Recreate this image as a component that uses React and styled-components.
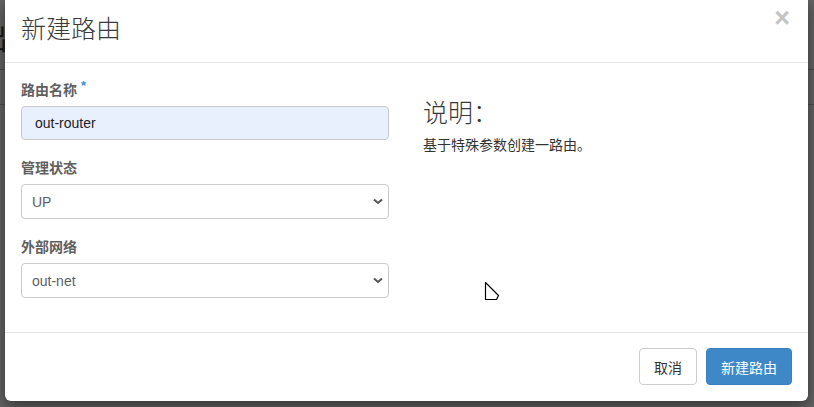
import React from 'react';
import styled, { createGlobalStyle } from 'styled-components';

const GlobalStyle = createGlobalStyle`
  html, body {
    margin: 0;
    padding: 0;
    overflow: hidden;
  }

  body {
    font-family: 'Liberation Sans', 'Noto Sans CJK SC', sans-serif;
    font-size: 14px;
    color: #333;
  }

  * {
    box-sizing: border-box;
  }
`;

function Chevron() {
  return (
    <svg width="10" height="7" viewBox="0 0 10 7">
      <path d="M1 1.5 L5 5 L9 1.5" fill="none" stroke="#555" strokeWidth="2" />
    </svg>
  );
}

function Cursor() {
  return (
    <svg width="16" height="22" viewBox="0 0 16 22">
      <path
        d="M1.5 1.5 L14.5 14.5 L12.5 18.5 L1.5 18.5 Z"
        fill="#fff"
        stroke="#000"
        strokeWidth="1.2"
        strokeLinejoin="round"
      />
    </svg>
  );
}

function SelectField({ value }) {
  return (
    <SelectWrap>
      <Select defaultValue={value}>
        <option value={value}>{value}</option>
      </Select>
      <ChevronBox>
        <Chevron />
      </ChevronBox>
    </SelectWrap>
  );
}

function App() {
  return (
    <>
      <GlobalStyle />
      <Backdrop>
        <BehindGlyph aria-hidden="true">出</BehindGlyph>
        <Modal>
          <ModalHeader>
            <ModalTitle>新建路由</ModalTitle>
            <CloseButton>×</CloseButton>
          </ModalHeader>

          <ModalBody>
            <FormColumn>
              <FormGroup>
                <Label>
                  路由名称<Required>*</Required>
                </Label>
                <TextInput type="text" defaultValue="out-router" />
              </FormGroup>
              <FormGroup>
                <Label>管理状态</Label>
                <SelectField value="UP" />
              </FormGroup>
              <FormGroup>
                <Label>外部网络</Label>
                <SelectField value="out-net" />
              </FormGroup>
            </FormColumn>

            <HelpColumn>
              <HelpTitle>说明：</HelpTitle>
              <HelpText>基于特殊参数创建一路由。</HelpText>
            </HelpColumn>
          </ModalBody>

          <ModalFooter>
            <Button>取消</Button>
            <Button primary>新建路由</Button>
          </ModalFooter>

          <CursorBox>
            <Cursor />
          </CursorBox>
        </Modal>
      </Backdrop>
    </>
  );
}

export default App;

const Backdrop = styled.div`
  position: relative;
  width: 100vw;
  height: 100vh;
  padding-left: 5px;

  background-color: #646464;
  background-image: linear-gradient(
      to bottom,
      transparent 69px,
      #4e4e4e 69px,
      #4e4e4e 70px,
      transparent 70px
    ),
    linear-gradient(
      to bottom,
      transparent 104px,
      #4e4e4e 104px,
      #4e4e4e 105px,
      transparent 105px
    );
  overflow: hidden;
`;

const BehindGlyph = styled.div`
  position: absolute;
  left: -22px;
  top: 18px;

  font-family: 'Noto Sans CJK SC', sans-serif;
  font-size: 30px;
  line-height: 36px;
  color: #1c1c1c;
`;

const Modal = styled.div`
  position: relative;
  width: 803px;

  background-color: #fff;
  border-radius: 0 0 6px 6px;
  box-shadow: 0 5px 15px rgba(0, 0, 0, 0.5);

  display: flex;
  flex-direction: column;
`;

const ModalHeader = styled.div`
  padding: 10px 18px 18px 16px;
  border-bottom: 1px solid #e5e5e5;

  display: flex;
  justify-content: space-between;
  align-items: flex-start;
`;

const ModalTitle = styled.h4`
  margin: 0;

  font-family: 'Noto Sans CJK SC', sans-serif;
  font-size: 25px;
  font-weight: 300;
  line-height: 34px;
  color: #3a3a3a;
`;

const CloseButton = styled.button`
  padding: 0;
  margin-top: -2px;

  background: none;
  border: none;

  font-family: 'Liberation Sans', sans-serif;
  font-size: 27px;
  font-weight: 700;
  line-height: 20px;
  color: #c4c4c4;
`;

const ModalBody = styled.div`
  padding: 17px 16px 34px;

  display: grid;
  grid-template-columns: 368px 1fr;
  column-gap: 34px;
`;

const FormColumn = styled.div`
  display: flex;
  flex-direction: column;
  gap: 18px;
`;

const FormGroup = styled.div`
  display: flex;
  flex-direction: column;
  gap: 6px;
`;

const Label = styled.label`
  height: 20px;

  font-family: 'Liberation Sans', 'Noto Sans CJK SC', sans-serif;
  font-size: 14px;
  font-weight: 700;
  line-height: 20px;
  color: #5f5f5f;
`;

const Required = styled.span`
  position: relative;
  top: -5px;
  margin-left: 4px;

  font-size: 13px;
  color: #3d8bd0;
`;

const TextInput = styled.input`
  width: 100%;
  height: 34px;
  padding: 0 13px;

  background-color: #e8f0fe;
  border: 1px solid #c9c9c9;
  border-radius: 4px;

  font-family: 'Liberation Sans', sans-serif;
  font-size: 14px;
  color: #222;

  &:focus {
    outline: none;
  }
`;

const SelectWrap = styled.div`
  position: relative;
  width: 100%;
  height: 35px;
`;

const Select = styled.select`
  width: 100%;
  height: 100%;
  padding: 0 10px;

  appearance: none;
  background-color: #fff;
  border: 1px solid #cbcbcb;
  border-radius: 4px;

  font-family: 'Liberation Sans', sans-serif;
  font-size: 14px;
  color: #606060;

  &:focus {
    outline: none;
  }
`;

const ChevronBox = styled.span`
  position: absolute;
  right: 6px;
  top: 14px;

  display: flex;
  pointer-events: none;
`;

const HelpColumn = styled.div`
  padding-top: 16px;

  display: flex;
  flex-direction: column;
  gap: 8px;
`;

const HelpTitle = styled.h3`
  margin: 0;

  font-family: 'Noto Sans CJK SC', sans-serif;
  font-size: 25px;
  font-weight: 300;
  line-height: 30px;
  color: #3a3a3a;
`;

const HelpText = styled.p`
  margin: 0;

  font-family: 'Noto Sans CJK SC', sans-serif;
  font-size: 14px;
  line-height: 20px;
  color: #333;
`;

const ModalFooter = styled.div`
  padding: 15px 16px 16px;
  border-top: 1px solid #e5e5e5;

  display: flex;
  justify-content: flex-end;
  gap: 9px;
`;

const Button = styled.button`
  height: 37px;
  padding: 0 14px;

  background-color: ${({ primary }) => (primary ? '#3f88c8' : '#fff')};
  border: 1px solid ${({ primary }) => (primary ? '#3a80be' : '#ccc')};
  border-radius: 4px;

  font-family: 'Noto Sans CJK SC', sans-serif;
  font-size: 14px;
  color: ${({ primary }) => (primary ? '#fff' : '#333')};
`;

const CursorBox = styled.span`
  position: absolute;
  left: 479px;
  top: 281px;

  display: flex;
  pointer-events: none;
`;
